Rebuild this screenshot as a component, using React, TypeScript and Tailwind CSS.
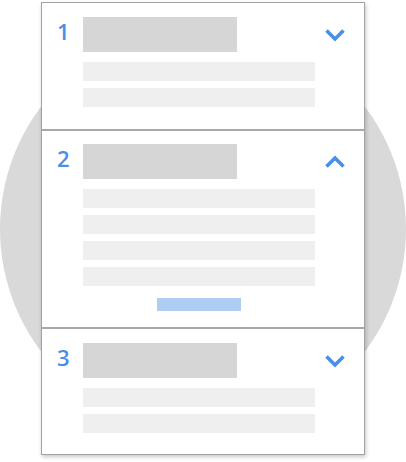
import React from "react";

function Chevron({ up }: { up?: boolean }) {
  return (
    <svg width="22" height="16" viewBox="0 0 22 16" className="block">
      <path
        d={up ? "M2.5 12.5 L11 4 L19.5 12.5" : "M2.5 3.5 L11 12 L19.5 3.5"}
        fill="none"
        stroke="#4a8fe7"
        strokeWidth="3.6"
        strokeLinecap="butt"
        strokeLinejoin="miter"
      />
    </svg>
  );
}

function Section({
  n,
  lines,
  up,
  button,
  className,
}: {
  n: string;
  lines: number;
  up?: boolean;
  button?: boolean;
  className: string;
}) {
  return (
    <div className={`flex pl-[15px] ${className}`}>
      <div
        className="w-[26px] text-[22px] font-semibold leading-none text-[#4a8fe7] pt-[3px]"
        style={{ fontFamily: "'Open Sans', sans-serif" }}
      >
        {n}
      </div>
      <div className="w-[232px] flex flex-col">
        <div className="w-[154px] h-[35px] bg-[#d6d6d6]" />
        <div className="flex flex-col gap-[7px] mt-[10px]">
          {Array.from({ length: lines }).map((_, i) => (
            <div key={i} className="h-[19px] bg-[#efefef]" />
          ))}
        </div>
        {button && <div className="self-center w-[84px] h-[13px] bg-[#aecdf4] mt-[12px]" />}
      </div>
      <div className="ml-[9px] h-[35px] flex items-center">
        <Chevron up={up} />
      </div>
    </div>
  );
}

export default function App() {
  return (
    <div className="relative w-[406px] h-[462px] bg-white overflow-hidden">
      <div className="absolute left-0 top-[26px] w-[406px] h-[406px] rounded-full bg-[#d9d9d9]" />
      <div className="relative ml-[41px] mt-[2px] w-[324px] bg-white border border-[#a3a3a3] shadow-[1px_2px_4px_rgba(0,0,0,0.22)]">
        <Section n="1" lines={2} className="pt-[14px] pb-[22px] border-b-2 border-[#a8a8a8]" />
        <Section n="2" lines={4} up button className="pt-[13px] pb-[16px] border-b-2 border-[#a8a8a8]" />
        <Section n="3" lines={2} className="pt-[14px] pb-[21px]" />
      </div>
    </div>
  );
}
